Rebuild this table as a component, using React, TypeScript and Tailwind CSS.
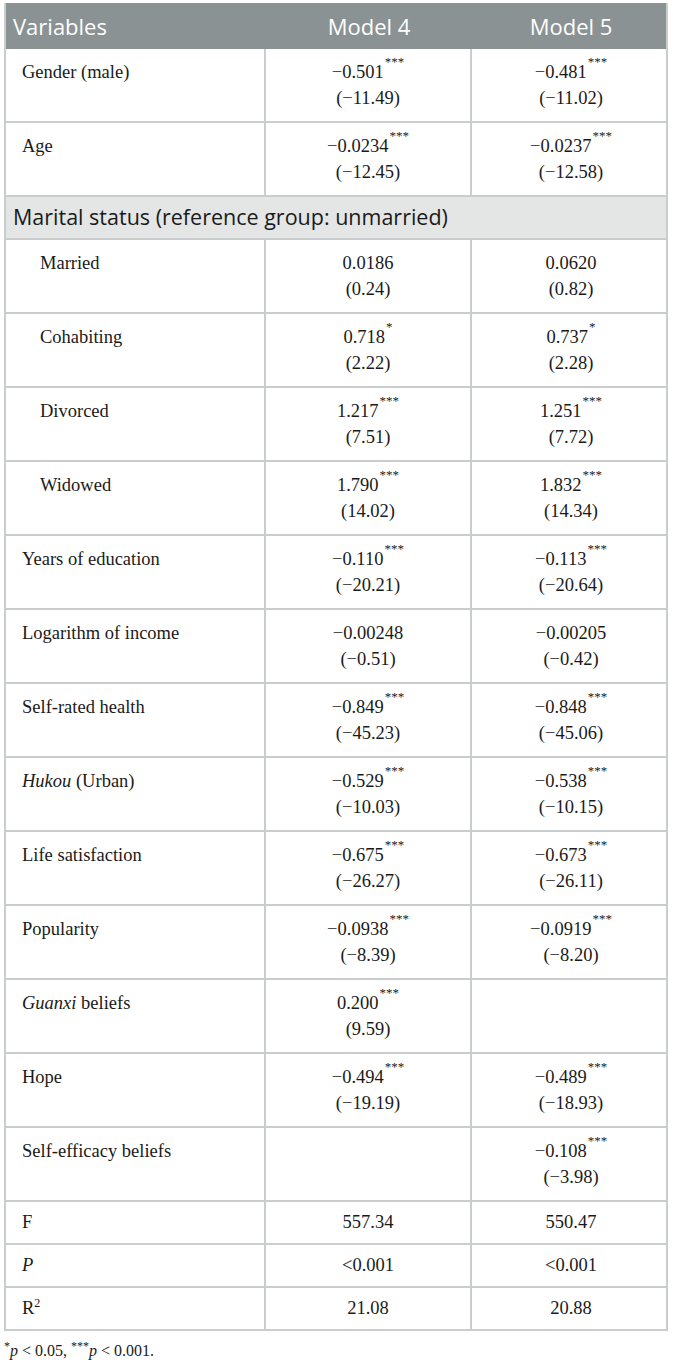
import type { ReactNode } from "react";

type Row =
  | { kind: "pair"; label: ReactNode; indent?: boolean; m4?: [ReactNode, string]; m5?: [ReactNode, string] }
  | { kind: "group"; label: string }
  | { kind: "single"; label: ReactNode; m4: string; m5: string };

const stars = (n: number) => <sup className="ml-[1px] align-[6px] text-[13px] leading-none">{"*".repeat(n)}</sup>;

const ROWS: Row[] = [
  { kind: "pair", label: "Gender (male)", m4: [<>−0.501{stars(3)}</>, "(−11.49)"], m5: [<>−0.481{stars(3)}</>, "(−11.02)"] },
  { kind: "pair", label: "Age", m4: [<>−0.0234{stars(3)}</>, "(−12.45)"], m5: [<>−0.0237{stars(3)}</>, "(−12.58)"] },
  { kind: "group", label: "Marital status (reference group: unmarried)" },
  { kind: "pair", label: "Married", indent: true, m4: ["0.0186", "(0.24)"], m5: ["0.0620", "(0.82)"] },
  { kind: "pair", label: "Cohabiting", indent: true, m4: [<>0.718{stars(1)}</>, "(2.22)"], m5: [<>0.737{stars(1)}</>, "(2.28)"] },
  { kind: "pair", label: "Divorced", indent: true, m4: [<>1.217{stars(3)}</>, "(7.51)"], m5: [<>1.251{stars(3)}</>, "(7.72)"] },
  { kind: "pair", label: "Widowed", indent: true, m4: [<>1.790{stars(3)}</>, "(14.02)"], m5: [<>1.832{stars(3)}</>, "(14.34)"] },
  { kind: "pair", label: "Years of education", m4: [<>−0.110{stars(3)}</>, "(−20.21)"], m5: [<>−0.113{stars(3)}</>, "(−20.64)"] },
  { kind: "pair", label: "Logarithm of income", m4: ["−0.00248", "(−0.51)"], m5: ["−0.00205", "(−0.42)"] },
  { kind: "pair", label: "Self-rated health", m4: [<>−0.849{stars(3)}</>, "(−45.23)"], m5: [<>−0.848{stars(3)}</>, "(−45.06)"] },
  { kind: "pair", label: <><i>Hukou</i> (Urban)</>, m4: [<>−0.529{stars(3)}</>, "(−10.03)"], m5: [<>−0.538{stars(3)}</>, "(−10.15)"] },
  { kind: "pair", label: "Life satisfaction", m4: [<>−0.675{stars(3)}</>, "(−26.27)"], m5: [<>−0.673{stars(3)}</>, "(−26.11)"] },
  { kind: "pair", label: "Popularity", m4: [<>−0.0938{stars(3)}</>, "(−8.39)"], m5: [<>−0.0919{stars(3)}</>, "(−8.20)"] },
  { kind: "pair", label: <><i>Guanxi</i> beliefs</>, m4: [<>0.200{stars(3)}</>, "(9.59)"] },
  { kind: "pair", label: "Hope", m4: [<>−0.494{stars(3)}</>, "(−19.19)"], m5: [<>−0.489{stars(3)}</>, "(−18.93)"] },
  { kind: "pair", label: "Self-efficacy beliefs", m5: [<>−0.108{stars(3)}</>, "(−3.98)"] },
  { kind: "single", label: "F", m4: "557.34", m5: "550.47" },
  { kind: "single", label: <i>P</i>, m4: "<0.001", m5: "<0.001" },
  { kind: "single", label: <>R<sup className="align-[7px] text-[12px] leading-none">2</sup></>, m4: "21.08", m5: "20.88" },
];

const GRID = "grid grid-cols-[260px_206px_198px] border-b-2 border-[#c9cdcd]";
const SERIF = "font-['Liberation_Serif','Times_New_Roman',serif] text-[18.5px] text-[#1a1a1a]";
const SANS = "font-['Open_Sans',sans-serif]";

function PairCell({ value, last }: { value?: [ReactNode, string]; last?: boolean }) {
  return (
    <div className={`flex flex-col items-center py-[10px] leading-[26px] ${last ? "" : "border-r-2 border-[#c9cdcd]"}`}>
      {value && (
        <>
          <span>{value[0]}</span>
          <span>{value[1]}</span>
        </>
      )}
    </div>
  );
}

export default function App() {
  return (
    <div className="min-h-screen bg-white pl-[4px] pt-[3px]">
      <div className="w-[664px] border-l-2 border-r-2 border-[#c9cdcd]">
        <div className={`grid h-[46px] grid-cols-[260px_206px_198px] items-center bg-[#8b9293] text-[22px] text-white ${SANS}`}>
          <span className="pl-[7px]">Variables</span>
          <span className="text-center">Model 4</span>
          <span className="text-center">Model 5</span>
        </div>

        {ROWS.map((row, i) => {
          if (row.kind === "group") {
            return (
              <div key={i} className={`flex h-[43px] items-center border-b-2 border-[#c9cdcd] bg-[#e4e6e6] pl-[7px] text-[21.5px] text-[#1a1a1a] ${SANS}`}>
                {row.label}
              </div>
            );
          }
          if (row.kind === "single") {
            return (
              <div key={i} className={`${GRID} h-[43px] ${SERIF}`}>
                <div className="flex items-center border-r-2 border-[#c9cdcd] pl-[16px]">{row.label}</div>
                <div className="flex items-center justify-center border-r-2 border-[#c9cdcd]">{row.m4}</div>
                <div className="flex items-center justify-center">{row.m5}</div>
              </div>
            );
          }
          return (
            <div key={i} className={`${GRID} h-[74px] ${SERIF}`}>
              <div className={`border-r-2 border-[#c9cdcd] py-[10px] leading-[26px] ${row.indent ? "pl-[34px]" : "pl-[16px]"}`}>
                {row.label}
              </div>
              <PairCell value={row.m4} />
              <PairCell value={row.m5} last />
            </div>
          );
        })}
      </div>
      <p className="mt-[8px] font-['Liberation_Serif','Times_New_Roman',serif] text-[16px] text-[#1a1a1a]">
        <sup className="text-[12px]">*</sup>
        <i>p</i> &lt; 0.05, <sup className="text-[12px]">***</sup>
        <i>p</i> &lt; 0.001.
      </p>
    </div>
  );
}
